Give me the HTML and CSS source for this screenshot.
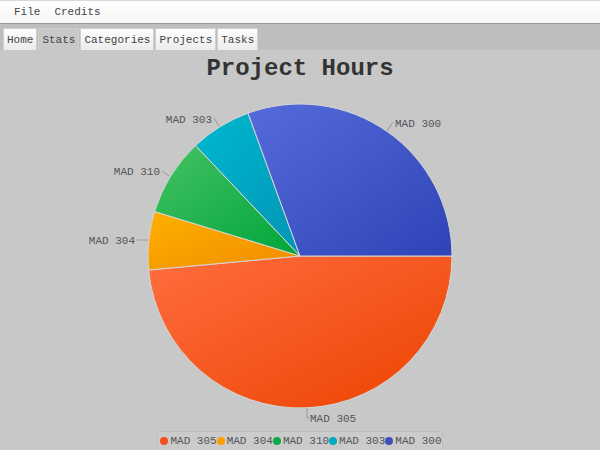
FILE: index.html
```html
<!DOCTYPE html>
<html>

<head>
    <title>Stats</title>
    <link rel="stylesheet" href="styles.css">
</head>

<body>
    <div class="menubar">
        <span class="menu-item">File</span>
        <span class="menu-item">Credits</span>
    </div>

    <div class="tabstrip">
        <button class="tab">Home</button>
        <button class="tab active">Stats</button>
        <button class="tab">Categories</button>
        <button class="tab">Projects</button>
        <button class="tab">Tasks</button>
    </div>

    <div class="content">
        <h1 class="chart-title">Project Hours</h1>

        <!-- viewBox uses page coordinates, chart starts at y=84 -->
        <svg class="chart" width="600" height="346" viewBox="0 84 600 346">
            <defs>
                <linearGradient id="g305" x1="0" y1="0" x2="1" y2="1">
                    <stop offset="0" stop-color="#ff6d3f" />
                    <stop offset="1" stop-color="#ec4300" />
                </linearGradient>
                <linearGradient id="g304" x1="0" y1="0" x2="1" y2="1">
                    <stop offset="0" stop-color="#ffb000" />
                    <stop offset="1" stop-color="#f08c00" />
                </linearGradient>
                <linearGradient id="g310" x1="0" y1="0" x2="1" y2="1">
                    <stop offset="0" stop-color="#44c262" />
                    <stop offset="1" stop-color="#00a53a" />
                </linearGradient>
                <linearGradient id="g303" x1="0" y1="0" x2="1" y2="1">
                    <stop offset="0" stop-color="#00b8d0" />
                    <stop offset="1" stop-color="#0095b4" />
                </linearGradient>
                <linearGradient id="g300" x1="0" y1="0" x2="1" y2="1">
                    <stop offset="0" stop-color="#566bdb" />
                    <stop offset="1" stop-color="#2e44b6" />
                </linearGradient>
            </defs>

            <g class="slices">
                <path fill="url(#g305)" d="M300,256 L452,256 A152,152 0 0,1 148.65,270.04 Z" />
                <path fill="url(#g304)" d="M300,256 L148.65,270.04 A152,152 0 0,1 154.64,211.56 Z" />
                <path fill="url(#g310)" d="M300,256 L154.64,211.56 A152,152 0 0,1 195.56,145.56 Z" />
                <path fill="url(#g303)" d="M300,256 L195.56,145.56 A152,152 0 0,1 248.01,113.17 Z" />
                <path fill="url(#g300)" d="M300,256 L248.01,113.17 A152,152 0 0,1 452,256 Z" />
            </g>

            <g class="leaders">
                <polyline points="307,408 307,418 309,418" />
                <polyline points="148,240 137,240" />
                <polyline points="169,176 162,171" />
                <polyline points="219,126 214,118" />
                <polyline points="387,131 393,122" />
            </g>

            <g class="labels">
                <text x="310" y="422">MAD 305</text>
                <text x="135" y="244" text-anchor="end">MAD 304</text>
                <text x="160" y="175" text-anchor="end">MAD 310</text>
                <text x="212" y="123" text-anchor="end">MAD 303</text>
                <text x="395" y="127">MAD 300</text>
            </g>
        </svg>

        <div class="legend">
            <span class="legend-item"><span class="dot c305"></span>MAD 305</span>
            <span class="legend-item"><span class="dot c304"></span>MAD 304</span>
            <span class="legend-item"><span class="dot c310"></span>MAD 310</span>
            <span class="legend-item"><span class="dot c303"></span>MAD 303</span>
            <span class="legend-item"><span class="dot c300"></span>MAD 300</span>
        </div>
    </div>
</body>

</html>
```

FILE: styles.css
```css
body {
    margin: 0;
    height: 450px;
    overflow: hidden;
    font-family: "Courier New", Courier, "Nimbus Mono PS", FreeMono, "Liberation Mono", monospace;
    background-color: #c8c8c8;
}

.menubar {
    display: flex;
    height: 24px;
    align-items: center;
    padding-left: 7px;
    background: linear-gradient(#ffffff, #f6f6f6);
    border-top: 1px solid #d8d8d8;
    border-bottom: 1px solid #9a9a9a;
    box-sizing: border-box;
}

.menu-item {
    padding: 0 7px;
    font-size: 11px;
    color: #444;
}

.tabstrip {
    display: flex;
    gap: 1px;
    height: 26px;
    padding: 4px 0 0 3px;
    box-sizing: border-box;
    background-color: #bebebe;
    align-items: flex-end;
}

.tab {
    height: 22px;
    padding: 0 3px;
    font-family: inherit;
    font-size: 11px;
    color: #444;
    background: linear-gradient(#fdfdfd, #ececec);
    border: 1px solid #d0d0d0;
    border-bottom: none;
    border-radius: 1px 1px 0 0;
}

.tab.active {
    background: #c8c8c8;
    border-color: #cfcfcf;
}

.content {
    display: flex;
    flex-direction: column;
    align-items: center;
}

.chart-title {
    margin: 4px 0 0;
    height: 30px;
    line-height: 30px;
    font-size: 24px;
    font-weight: bold;
    color: #333;
}

.chart {
    display: block;
}

.slices path {
    stroke: #d6d6d6;
    stroke-width: 1;
}

.leaders polyline {
    fill: none;
    stroke: #999;
    stroke-width: 1;
}

.labels text {
    font-family: "Courier New", Courier, "Nimbus Mono PS", FreeMono, "Liberation Mono", monospace;
    font-size: 11px;
    fill: #555;
}

.legend {
    display: flex;
    margin-top: 1px;
    padding: 3px 0 4px 1px;
    border: 1px solid #bfbfbf;
    background-color: #cbcbcb;
    font-size: 11px;
    color: #555;
}

.legend-item {
    display: flex;
    align-items: center;
}

.dot {
    width: 8px;
    height: 8px;
    margin: 0 2px 0 1px;
    border-radius: 50%;
}

.legend-item + .legend-item .dot {
    margin-left: 0;
}

.c305 { background-color: #f4511e; }
.c304 { background-color: #ffa000; }
.c310 { background-color: #0ba94a; }
.c303 { background-color: #00acc1; }
.c300 { background-color: #3f51b5; }
```
